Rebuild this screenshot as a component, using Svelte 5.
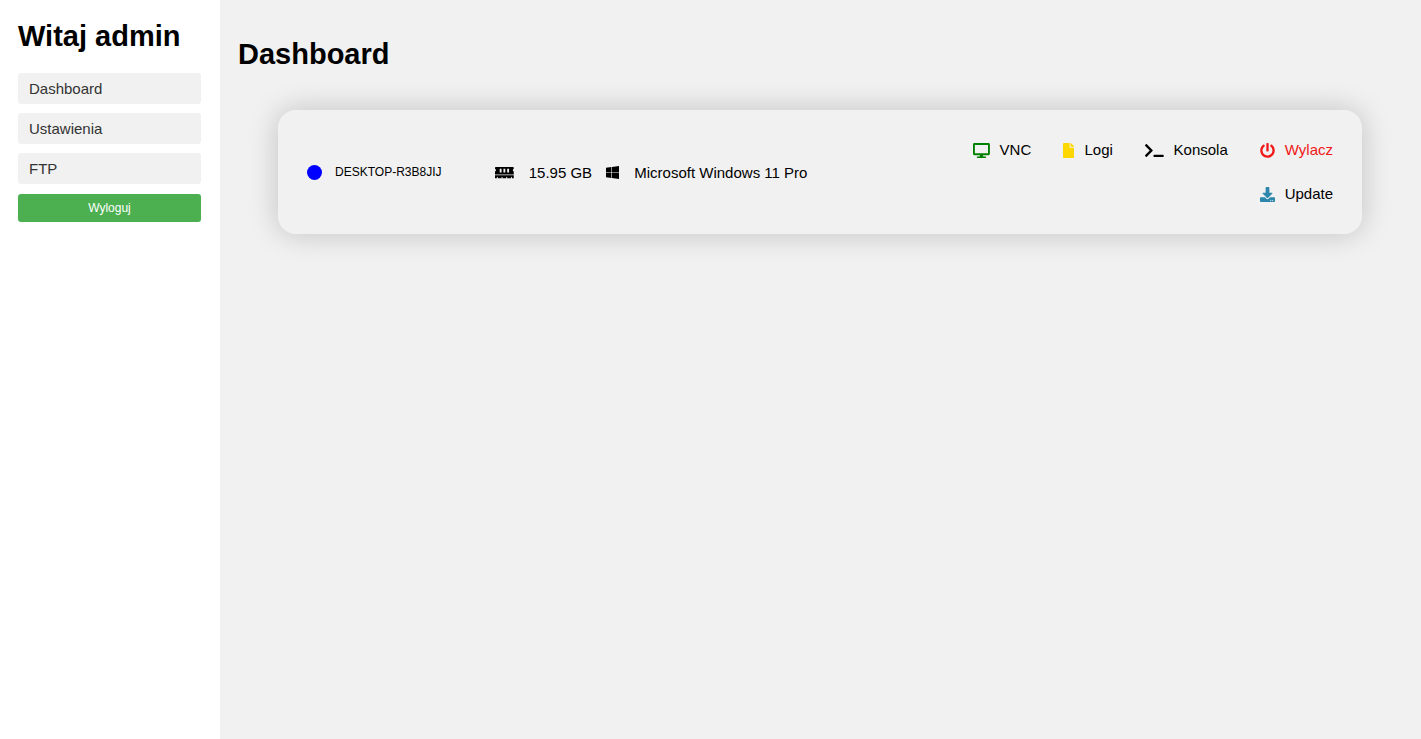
<script>
    let user = $state('admin');

    const menu = ['Dashboard', 'Ustawienia', 'FTP'];

    const icons = {
        memory: {
            box: '0 0 640 512',
            path: 'M640 130.94V96c0-17.67-14.33-32-32-32H32c-17.67 0-32 14.33-32 32v34.94c18.6 6.61 32 24.19 32 45.06s-13.4 38.45-32 45.06V320h640v-98.94c-18.6-6.61-32-24.19-32-45.06s13.4-38.45 32-45.06zM224 256h-64V128h64v128zm128 0h-64V128h64v128zm128 0h-64V128h64v128zM0 448h64v-26.67c0-8.84 7.16-16 16-16s16 7.16 16 16V448h128v-26.67c0-8.84 7.16-16 16-16s16 7.16 16 16V448h128v-26.67c0-8.84 7.16-16 16-16s16 7.16 16 16V448h128v-26.67c0-8.84 7.16-16 16-16s16 7.16 16 16V448h64v-96H0v96z'
        },
        windows: {
            box: '0 0 448 512',
            path: 'M0 93.7l183.6-25.3v177.4H0V93.7zm0 324.6l183.6 25.3V268.4H0v149.9zm203.8 28L448 480V268.4H203.8v177.9zm0-380.6v180.1H448V32L203.8 65.7z'
        },
        desktop: {
            box: '0 0 576 512',
            path: 'M528 0H48C21.5 0 0 21.5 0 48v320c0 26.5 21.5 48 48 48h192l-16 48h-72c-13.3 0-24 10.7-24 24s10.7 24 24 24h272c13.3 0 24-10.7 24-24s-10.7-24-24-24h-72l-16-48h192c26.5 0 48-21.5 48-48V48c0-26.5-21.5-48-48-48zm-16 352H64V64h448v288z'
        },
        file: {
            box: '0 0 384 512',
            path: 'M224 136V0H24C10.7 0 0 10.7 0 24v464c0 13.3 10.7 24 24 24h336c13.3 0 24-10.7 24-24V160H248c-13.2 0-24-10.8-24-24zm160-14.1v6.1H256V0h6.1c6.4 0 12.5 2.5 17 7l97.9 98c4.5 4.5 7 10.6 7 16.9z'
        },
        terminal: {
            box: '0 0 640 512',
            path: 'M257.981 272.971L63.638 467.314c-9.373 9.373-24.569 9.373-33.941 0L7.029 444.647c-9.357-9.357-9.375-24.522-.04-33.901L161.011 256 6.99 101.255c-9.335-9.379-9.317-24.544.04-33.901l22.667-22.667c9.373-9.373 24.569-9.373 33.941 0L257.981 239.03c9.373 9.372 9.373 24.568 0 33.941zM640 456v-32c0-13.255-10.745-24-24-24H312c-13.255 0-24 10.745-24 24v32c0 13.255 10.745 24 24 24h304c13.255 0 24-10.745 24-24z'
        },
        power: {
            box: '0 0 512 512',
            path: 'M400 54.1c63 45 104 118.6 104 201.9 0 136.8-110.8 247.7-247.5 248C120 504.3 8.2 393 8 256.4 7.9 173.1 48.9 99.3 111.8 54.2c11.7-8.3 28-4.8 35 7.7L162.6 90c5.9 10.5 3.1 23.8-6.6 31-41.5 30.8-68 79.6-68 134.9-.1 92.3 74.5 168.1 168 168.1 91.6 0 168.6-74.2 168-169.1-.3-51.8-24.7-101.8-68.1-134-9.7-7.2-12.4-20.5-6.5-30.9l15.8-28.1c7-12.4 23.2-16.1 34.8-7.8zM296 264V24c0-13.3-10.7-24-24-24h-32c-13.3 0-24 10.7-24 24v240c0 13.3 10.7 24 24 24h32c13.3 0 24-10.7 24-24z'
        },
        download: {
            box: '0 0 512 512',
            path: 'M216 0h80c13.3 0 24 10.7 24 24v168h87.7c17.8 0 26.7 21.5 14.1 34.1L269.7 378.3c-7.5 7.5-19.8 7.5-27.3 0L90.1 226.1c-12.6-12.6-3.7-34.1 14.1-34.1H192V24c0-13.3 10.7-24 24-24zm296 376v112c0 13.3-10.7 24-24 24H24c-13.3 0-24-10.7-24-24V376c0-13.3 10.7-24 24-24h146.7l49 49c20.1 20.1 52.5 20.1 72.6 0l49-49H488c13.3 0 24 10.7 24 24zm-124 88c0-11-9-20-20-20s-20 9-20 20 9 20 20 20 20-9 20-20zm64 0c0-11-9-20-20-20s-20 9-20 20 9 20 20 20 20-9 20-20z'
        }
    };

    const actions = [
        { label: 'VNC', icon: 'desktop', kind: 'vnc' },
        { label: 'Logi', icon: 'file', kind: 'logs' },
        { label: 'Konsola', icon: 'terminal', kind: 'console' },
        { label: 'Wylacz', icon: 'power', kind: 'shutdown' },
        { label: 'Update', icon: 'download', kind: 'update' }
    ];

    let devices = $state([
        { name: 'DESKTOP-R3B8JIJ', ram: '15.95 GB', os: 'Microsoft Windows 11 Pro' }
    ]);
</script>

{#snippet icon(name)}
    <svg class="icon" viewBox={icons[name].box} aria-hidden="true">
        <path d={icons[name].path} />
    </svg>
{/snippet}

<div class="layout">
    <aside class="sidebar">
        <h1>Witaj {user}</h1>
        <nav>
            {#each menu as item}
                <a href="#{item.toLowerCase()}">{item}</a>
            {/each}
        </nav>
        <button class="logout">Wyloguj</button>
    </aside>

    <main>
        <h1>Dashboard</h1>
        {#each devices as device}
            <section class="device">
                <div class="name">
                    <span class="status"></span>
                    {device.name}
                </div>
                <div class="specs">
                    <span class="spec">{@render icon('memory')}{device.ram}</span>
                    <span class="spec">{@render icon('windows')}{device.os}</span>
                </div>
                <div class="actions">
                    {#each actions as action}
                        <a href="#{action.kind}" class="action {action.kind}">
                            {@render icon(action.icon)}{action.label}
                        </a>
                    {/each}
                </div>
            </section>
        {/each}
    </main>
</div>

<style>
    :global(body) {
        margin: 0;
        background: #f1f1f1;
        font-family: 'Liberation Sans', Arial, sans-serif;
        font-size: 15px;
        color: #000;
    }

    .layout {
        display: flex;
        min-height: 100vh;
    }

    h1 {
        margin: 0;
        font-size: 29px;
        line-height: 36px;
    }

    .sidebar {
        box-sizing: border-box;
        flex: none;
        width: 220px;
        padding: 18px 19px 18px 18px;
        background: #fff;
    }

    nav {
        display: flex;
        flex-direction: column;
        gap: 9px;
        margin-top: 19px;
    }

    nav a {
        padding: 7px 11px;
        line-height: 17px;
        border-radius: 3px;
        background: #f1f1f1;
        color: #333;
        text-decoration: none;
    }

    nav a:hover {
        background: #ddd;
    }

    .logout {
        width: 100%;
        margin-top: 10px;
        padding: 7px;
        border: none;
        border-radius: 3px;
        background: #4caf50;
        color: #fff;
        font-family: inherit;
        font-size: 12px;
        line-height: 14px;
        cursor: pointer;
    }

    main {
        flex: 1;
        padding: 36px 18px;
    }

    .device {
        display: grid;
        grid-template-columns: 188px 1fr 400px;
        align-items: center;
        margin: 38px 41px 0 40px;
        padding: 18px 29px;
        border-radius: 18px;
        box-shadow: 0 0 30px rgba(0, 0, 0, 0.2);
        background: #f1f1f1;
    }

    .name {
        display: flex;
        align-items: center;
        gap: 13px;
        font-size: 12px;
    }

    .status {
        width: 15px;
        height: 15px;
        border-radius: 50%;
        background: blue;
    }

    .specs {
        display: flex;
        gap: 14px;
    }

    .spec {
        display: flex;
        align-items: center;
        gap: 15px;
        white-space: nowrap;
    }

    .icon {
        flex: none;
        height: 15px;
        fill: currentColor;
    }

    .actions {
        display: flex;
        flex-wrap: wrap;
        justify-content: flex-end;
        column-gap: 32px;
    }

    .action {
        display: flex;
        align-items: center;
        gap: 10px;
        line-height: 44px;
        color: #000;
        text-decoration: none;
    }

    .vnc .icon {
        fill: green;
    }

    .logs .icon {
        fill: gold;
    }

    .shutdown {
        color: #f01818;
    }

    .update .icon {
        fill: #2d87ad;
    }
</style>
